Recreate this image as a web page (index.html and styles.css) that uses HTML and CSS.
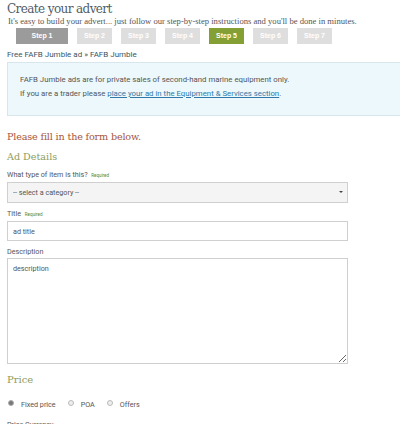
FILE: index.html
```html
<!DOCTYPE html>
<html lang="en">
<head>
  <meta charset="UTF-8" />
  <title>Create your advert</title>
  <link rel="stylesheet" href="styles.css">
</head>
<body>

  <h1 class="page-title">Create your advert</h1>
  <p class="intro">It's easy to build your advert... just follow our step-by-step instructions and you'll be done in minutes.</p>

  <!-- STEPS -->
  <div class="steps">
    <span class="step done wide">Step 1</span>
    <span class="step">Step 2</span>
    <span class="step">Step 3</span>
    <span class="step">Step 4</span>
    <span class="step current">Step 5</span>
    <span class="step">Step 6</span>
    <span class="step">Step 7</span>
  </div>

  <div class="crumbs">Free FAFB Jumble ad &raquo; FAFB Jumble</div>

  <div class="info-box">
    <p>FAFB Jumble ads are for private sales of second-hand marine equipment only.</p>
    <p>If you are a trader please <a href="#">place your ad in the Equipment &amp; Services section</a>.</p>
  </div>

  <h2 class="notice">Please fill in the form below.</h2>
  <h3 class="section-title">Ad Details</h3>

  <!-- FORM -->
  <form class="advert-form">
    <label class="field-label">What type of item is this? <span class="req">Required</span></label>
    <div class="select-wrap">
      <select class="field">
        <option>-- select a category --</option>
      </select>
    </div>

    <label class="field-label">Title <span class="req">Required</span></label>
    <input class="field" type="text" placeholder="ad title">

    <label class="field-label">Description</label>
    <textarea class="field area" placeholder="description"></textarea>

    <h3 class="section-title price">Price</h3>

    <div class="radios">
      <label><span class="dot on"></span>Fixed price</label>
      <label><span class="dot"></span>POA</label>
      <label><span class="dot"></span>Offers</label>
    </div>

    <label class="field-label currency">Price Currency</label>
  </form>

</body>
</html>
```

FILE: styles.css
```css
html, body {
  overflow: hidden;
}
body {
  margin: 0;
  padding: 0 0 0 7px;
  font-family: 'Roboto', 'Liberation Sans', sans-serif;
  color: #555;
  background: #fff;
}
.page-title {
  font-family: 'DejaVu Serif', serif;
  font-weight: normal;
  font-size: 12px;
  letter-spacing: -0.6px;
  color: #4f5d68;
  margin: 0;
  padding-top: 2px;
  line-height: 14px;
}
.intro {
  font-family: 'Liberation Serif', serif;
  font-size: 8.6px;
  color: #555;
  margin: 0 0 0 1px;
  line-height: 10px;
}
.steps {
  display: flex;
  gap: 9px;
  margin: 2px 0 0 9px;
}
.step {
  width: 35px;
  height: 16px;
  line-height: 16px;
  text-align: center;
  font-family: 'Liberation Sans', sans-serif;
  font-size: 7px;
  font-weight: bold;
  color: #fff;
  background: #dedede;
}
.step.wide {
  width: 52px;
}
.step.done {
  background: #9b9b9b;
}
.step.current {
  background: #84a034;
}
.crumbs {
  font-size: 8px;
  color: #3b5664;
  margin-top: 6px;
  line-height: 10px;
}
.info-box {
  margin-top: 2px;
  background: #ecf8fc;
  border: 1px solid #d6e6ec;
  border-right: none;
  padding: 12px 12px 8px;
  height: 32px;
}
.info-box p {
  margin: 0 0 5px;
  font-size: 7.8px;
  line-height: 9px;
  color: #555;
}
.info-box a {
  color: #2f78a8;
}
.notice {
  font-family: 'DejaVu Serif', serif;
  font-weight: normal;
  font-size: 9.6px;
  letter-spacing: -0.15px;
  color: #a6543a;
  margin: 14px 0 0;
  line-height: 14px;
}
.section-title {
  font-family: 'DejaVu Serif', serif;
  font-weight: normal;
  font-size: 9.6px;
  color: #8f9c5c;
  margin: 6px 0 0;
  line-height: 14px;
}
.advert-form {
  display: flex;
  flex-direction: column;
  width: 341px;
}
.field-label {
  font-size: 7.2px;
  color: #555;
  line-height: 9px;
  margin-top: 6px;
}
.req {
  font-size: 4.5px;
  color: #4b8a3a;
  margin-left: 2px;
}
.field {
  box-sizing: border-box;
  width: 100%;
  margin-top: 2px;
  border: 1px solid #cfcfcf;
  font-family: 'Roboto', sans-serif;
  font-size: 7.2px;
  color: #555;
  padding: 0 5px;
  height: 20px;
  background: #fff;
}
.field::placeholder {
  color: #555;
}
.select-wrap {
  position: relative;
}
.select-wrap .field {
  appearance: none;
  -webkit-appearance: none;
  background: #f4f4f4;
  height: 21px;
  border-radius: 0;
}
.select-wrap::after {
  content: "";
  position: absolute;
  right: 5px;
  top: 11px;
  border-left: 2px solid transparent;
  border-right: 2px solid transparent;
  border-top: 2px solid #444;
}
.field.area {
  height: 106px;
  padding-top: 5px;
  resize: vertical;
}
.section-title.price {
  margin-top: 9px;
  font-size: 10px;
}
.radios {
  display: flex;
  gap: 12px;
  margin-top: 13px;
  margin-left: 1px;
}
.radios label {
  display: flex;
  align-items: center;
  font-size: 7.2px;
  color: #555;
}
.dot {
  width: 4px;
  height: 4px;
  border-radius: 50%;
  border: 1px solid #bbb;
  background: #eee;
  margin-right: 7px;
  margin-top: -3px;
}
.dot.on {
  background: #777;
  border-color: #aaa;
}
.field-label.currency {
  margin-top: 11px;
}
```
